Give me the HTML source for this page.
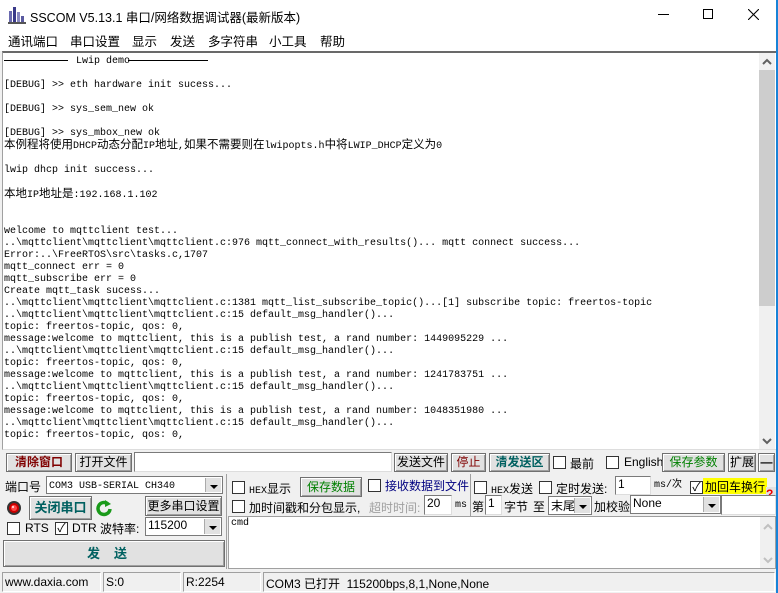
<!DOCTYPE html>
<html><head><meta charset="utf-8"><style>
*{margin:0;padding:0;box-sizing:border-box}
body{width:778px;height:593px;background:#f0f0f0;position:relative;overflow:hidden;font-family:"Liberation Sans","Noto Sans CJK SC",sans-serif;font-size:12px;color:#000}
.a{position:absolute;white-space:nowrap}
.mono{font-family:"Liberation Mono","Noto Sans CJK SC",monospace;font-size:10px;line-height:12px}
.btn{position:absolute;border:1px solid #707070;background:#e1e1e1;text-align:center;font-size:12px;box-shadow:inset 1px 1px #fff,inset -1px -1px #a0a0a0}
.cb{position:absolute;width:13px;height:13px;border:1px solid #333;background:#fff}
.inp{position:absolute;background:#fff;border:1px solid #7a7a7a;border-right-color:#ddd;border-bottom-color:#ddd;font-size:12px;padding-left:2px}
.sel{position:absolute;background:#fff;border:1px solid #7a7a7a;font-size:12px;padding-left:2px}
.dd{position:absolute;right:1px;top:1px;bottom:1px;width:16px;background:#e1e1e1;border-left:1px solid #aaa}
.dd:after{content:"";position:absolute;left:4px;top:7px;border:4px solid transparent;border-top:4px solid #000;border-bottom:0}
.sb{position:absolute;top:572px;height:20px;border:1px solid #a0a0a0;border-right-color:#fff;border-bottom-color:#fff;padding:2px 0 0 2px;font-size:12px}
.m{position:absolute;top:31px;font-size:12.5px;white-space:nowrap}
</style></head><body>
<div class="a" style="left:0;top:0;width:778px;height:30px;background:#fff"></div>
<svg class="a" style="left:8px;top:6px" width="18" height="18"><rect x="1" y="5" width="3" height="12" fill="#6a6ab0"/><rect x="5" y="1" width="3" height="16" fill="#3a3a8a"/><rect x="9" y="6" width="3" height="11" fill="#8888c0"/><rect x="13" y="10" width="3" height="7" fill="#5a5aa0"/><rect x="0" y="16" width="18" height="2" fill="#555"/></svg>
<div class="a" style="left:30px;top:7px;font-size:12.5px">SSCOM V5.13.1 串口/网络数据调试器(最新版本)</div>
<div class="a" style="left:658px;top:14px;width:11px;height:1px;background:#000"></div>
<div class="a" style="left:703px;top:9px;width:10px;height:10px;border:1px solid #000"></div>
<svg class="a" style="left:748px;top:9px" width="11" height="11"><path d="M0 0L11 11M11 0L0 11" stroke="#000" stroke-width="1.1"/></svg>
<div class="a" style="left:0;top:30px;width:778px;height:21px;background:#fff"></div>
<div class="m" style="left:8px">通讯端口</div>
<div class="m" style="left:70px">串口设置</div>
<div class="m" style="left:132px">显示</div>
<div class="m" style="left:170px">发送</div>
<div class="m" style="left:208px">多字符串</div>
<div class="m" style="left:269px">小工具</div>
<div class="m" style="left:320px">帮助</div>
<div class="a" style="left:2px;top:51px;width:774px;height:399px;background:#fff;border-top:2px solid #696969;border-left:1px solid #a0a0a0;border-bottom:1px solid #ddd"></div>
<div class="a" style="left:759px;top:53px;width:16px;height:396px;background:#f0f0f0"></div>
<div class="a" style="left:759px;top:70px;width:16px;height:236px;background:#cdcdcd"></div>
<svg class="a" style="left:762px;top:58px" width="10" height="8"><path d="M1 6L5 2L9 6" stroke="#606060" stroke-width="2" fill="none"/></svg>
<svg class="a" style="left:762px;top:437px" width="10" height="8"><path d="M1 2L5 6L9 2" stroke="#606060" stroke-width="2" fill="none"/></svg>
<div class="a" style="left:776px;top:0;width:2px;height:593px;background:#1883d7"></div>
<div class="a" style="left:4px;top:60px;width:64px;height:1px;background:#000"></div>
<div class="a" style="left:128px;top:60px;width:80px;height:1px;background:#000"></div>
<div class="a mono" style="left:4px;top:56px;white-space:pre">            Lwip demo 
 
[DEBUG] &gt;&gt; eth hardware init sucess...
 
[DEBUG] &gt;&gt; sys_sem_new ok
 
[DEBUG] &gt;&gt; sys_mbox_new ok
<span style="font-size:11.5px">本例程将使用</span>DHCP<span style="font-size:11.5px">动态分配</span>IP<span style="font-size:11.5px">地址</span>,<span style="font-size:11.5px">如果不需要则在</span>lwipopts.h<span style="font-size:11.5px">中将</span>LWIP_DHCP<span style="font-size:11.5px">定义为</span>0
 
lwip dhcp init success...
 
<span style="font-size:11.5px">本地</span>IP<span style="font-size:11.5px">地址是</span>:192.168.1.102
 
 
welcome to mqttclient test...
..\mqttclient\mqttclient\mqttclient.c:976 mqtt_connect_with_results()... mqtt connect success...
Error:..\FreeRTOS\src\tasks.c,1707
mqtt_connect err = 0
mqtt_subscribe err = 0
Create mqtt_task sucess...
..\mqttclient\mqttclient\mqttclient.c:1381 mqtt_list_subscribe_topic()...[1] subscribe topic: freertos-topic
..\mqttclient\mqttclient\mqttclient.c:15 default_msg_handler()...
topic: freertos-topic, qos: 0,
message:welcome to mqttclient, this is a publish test, a rand number: 1449095229 ...
..\mqttclient\mqttclient\mqttclient.c:15 default_msg_handler()...
topic: freertos-topic, qos: 0,
message:welcome to mqttclient, this is a publish test, a rand number: 1241783751 ...
..\mqttclient\mqttclient\mqttclient.c:15 default_msg_handler()...
topic: freertos-topic, qos: 0,
message:welcome to mqttclient, this is a publish test, a rand number: 1048351980 ...
..\mqttclient\mqttclient\mqttclient.c:15 default_msg_handler()...
topic: freertos-topic, qos: 0,</div>
<div class="btn" style="left:6px;top:453px;width:66px;height:19px;color:#800000;font-weight:bold;line-height:17px">清除窗口</div>
<div class="btn" style="left:75px;top:453px;width:57px;height:19px;line-height:17px">打开文件</div>
<div class="inp" style="left:134px;top:452px;width:258px;height:20px"></div>
<div class="btn" style="left:394px;top:453px;width:54px;height:19px;line-height:17px">发送文件</div>
<div class="btn" style="left:451px;top:453px;width:35px;height:19px;line-height:17px;color:#800000">停止</div>
<div class="btn" style="left:489px;top:453px;width:61px;height:19px;line-height:17px;color:#006060;font-weight:bold">清发送区</div>
<div class="cb" style="left:553px;top:456px"></div><div class="a" style="left:570px;top:455px">最前</div>
<div class="cb" style="left:606px;top:456px"></div><div class="a" style="left:624px;top:455px">English</div>
<div class="btn" style="left:662px;top:453px;width:63px;height:19px;line-height:17px;color:#008000">保存参数</div>
<div class="btn" style="left:728px;top:453px;width:28px;height:19px;line-height:17px">扩展</div>
<div class="btn" style="left:758px;top:453px;width:17px;height:19px;font-weight:bold;line-height:17px">—</div>
<div class="a" style="left:5px;top:478px">端口号</div>
<div class="sel" style="left:46px;top:476px;width:177px;height:18px"><span class="mono" style="font-size:10px">COM3 USB-SERIAL CH340</span><div class="dd"></div></div>
<svg class="a" style="left:6px;top:500px" width="16" height="16"><circle cx="8" cy="8" r="7" fill="#333"/><circle cx="8" cy="8" r="5" fill="#c00"/><circle cx="8" cy="8" r="3" fill="#f44"/><circle cx="7" cy="7" r="1.2" fill="#fcc"/></svg>
<div class="btn" style="left:29px;top:496px;width:63px;height:24px;line-height:22px;color:#006060;font-weight:bold;font-size:13px">关闭串口</div>
<svg class="a" style="left:96px;top:499px" width="16" height="18"><path d="M12 5A6 6 0 1 0 14 10" stroke="#1a9a1a" stroke-width="3.5" fill="none"/><path d="M9 1L15 5L9 8Z" fill="#1a9a1a"/></svg>
<div class="btn" style="left:145px;top:496px;width:77px;height:20px;line-height:18px">更多串口设置</div>
<div class="cb" style="left:7px;top:522px"></div><div class="a" style="left:25px;top:521px">RTS</div>
<div class="cb" style="left:55px;top:522px"></div><div class="a" style="left:55px;top:519px;font-size:12px;width:13px;text-align:center">✓</div><div class="a" style="left:72px;top:521px">DTR</div>
<div class="a" style="left:100px;top:520px">波特率:</div>
<div class="sel" style="left:145px;top:517px;width:77px;height:19px">115200<div class="dd"></div></div>
<div class="btn" style="left:3px;top:540px;width:222px;height:27px;line-height:25px;color:#006060;font-weight:bold;font-size:13px;letter-spacing:14px">发送</div>
<div class="a" style="left:226px;top:474px;width:1px;height:95px;background:#a0a0a0"></div>
<div class="cb" style="left:232px;top:481px"></div><div class="a" style="left:249px;top:480px"><span class="mono">HEX</span>显示</div>
<div class="btn" style="left:300px;top:477px;width:62px;height:20px;line-height:18px;color:#008000">保存数据</div>
<div class="cb" style="left:368px;top:479px"></div><div class="a" style="left:385px;top:477px;color:#000080">接收数据到文件</div>
<div class="a" style="left:470px;top:474px;width:1px;height:42px;background:#a0a0a0"></div>
<div class="cb" style="left:474px;top:481px"></div><div class="a" style="left:491px;top:480px"><span class="mono">HEX</span>发送</div>
<div class="cb" style="left:539px;top:481px"></div><div class="a" style="left:556px;top:480px">定时发送:</div>
<div class="inp" style="left:615px;top:476px;width:36px;height:19px">1</div>
<div class="a mono" style="left:654px;top:480px">ms/次</div>
<div class="cb" style="left:690px;top:481px"></div><div class="a" style="left:690px;top:478px;width:13px;text-align:center">✓</div>
<div class="a" style="left:703px;top:478px;width:64px;height:16px;background:#ffff00;padding-left:2px">加回车换行</div>
<div class="a" style="left:766px;top:487px;width:10px;height:14px;background:#e1e1e1;color:#e00;font-weight:bold;font-size:12px">?</div>
<div class="cb" style="left:232px;top:500px"></div><div class="a" style="left:249px;top:499px">加时间戳和分包显示,</div>
<div class="a" style="left:369px;top:499px;color:#a0a0a0">超时时间:</div>
<div class="inp" style="left:424px;top:495px;width:28px;height:20px">20</div>
<div class="a mono" style="left:455px;top:500px">ms</div>
<div class="a" style="left:472px;top:498px">第</div>
<div class="inp" style="left:485px;top:495px;width:17px;height:20px">1</div>
<div class="a" style="left:504px;top:498px">字节</div>
<div class="a" style="left:533px;top:498px">至</div>
<div class="sel" style="left:548px;top:496px;width:44px;height:19px">末尾<div class="dd"></div></div>
<div class="a" style="left:594px;top:498px">加校验</div>
<div class="sel" style="left:630px;top:495px;width:91px;height:19px">None<div class="dd"></div></div>
<div class="inp" style="left:721px;top:495px;width:55px;height:20px"></div>
<div class="a" style="left:228px;top:516px;width:548px;height:53px;background:#fff;border:1px solid #a0a0a0"></div>
<div class="a mono" style="left:231px;top:518px">cmd</div>
<div class="a" style="left:760px;top:517px;width:15px;height:51px;background:#f0f0f0"></div>
<svg class="a" style="left:763px;top:523px" width="10" height="8"><path d="M1 6L5 2L9 6" stroke="#c0c0c0" stroke-width="2" fill="none"/></svg>
<svg class="a" style="left:763px;top:556px" width="10" height="8"><path d="M1 2L5 6L9 2" stroke="#c0c0c0" stroke-width="2" fill="none"/></svg>
<div class="sb" style="left:2px;width:99px">www.daxia.com</div>
<div class="sb" style="left:103px;width:78px">S:0</div>
<div class="sb" style="left:183px;width:78px">R:2254</div>
<div class="sb" style="left:263px;width:512px">COM3 已打开&nbsp; 115200bps,8,1,None,None</div>
</body></html>
